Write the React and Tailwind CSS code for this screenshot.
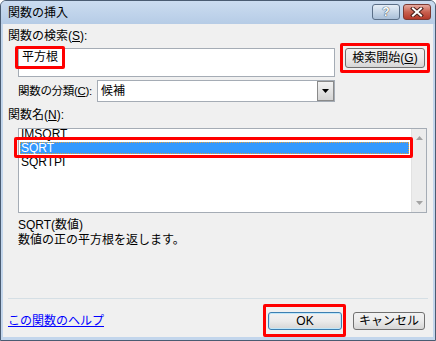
import React from "react";

const btn =
  "h-[18px] rounded-[3px] border bg-gradient-to-b from-[#f2f2f2] via-[#ebebeb] to-[#d6d6d6] flex items-center justify-center text-[12px] leading-none";

const RedBox = ({ className }) => (
  <div className={`absolute border-[3px] border-[#ff0000] rounded-[2px] pointer-events-none ${className}`} />
);

export default function App() {
  return (
    <div className="w-[436px] h-[341px] bg-white font-['Liberation_Sans','Noto_Sans_CJK_JP',sans-serif] text-[12px] text-black">
      <div className="w-full h-full flex flex-col rounded-t-[6px] border border-[#4a5c72] bg-[#c3d6ec]">
        {/* title bar */}
        <div className="h-[23px] shrink-0 flex items-center pl-[7px] pr-[4px] rounded-t-[5px] bg-gradient-to-b from-[#cbdcf0] to-[#b6cce6]">
          <span className="text-[12px] leading-none text-black">関数の挿入</span>
          <div className="ml-auto flex gap-[3px] self-start mt-[3px]">
            <div className="w-[28px] h-[16px] rounded-[3px] border border-[#5b6f88] bg-gradient-to-b from-[#e6eef7] via-[#c8d7e8] to-[#a9bfd8] flex items-center justify-center">
              <span className="text-[12px] font-bold leading-none text-white [text-shadow:0_0_1px_#2b3a4e,0_0_1px_#2b3a4e]">?</span>
            </div>
            <div className="w-[28px] h-[16px] rounded-[3px] border border-[#7b3a33] bg-gradient-to-b from-[#e6a99f] via-[#c8604f] to-[#b4392a] flex items-center justify-center">
              <svg width="14" height="10" viewBox="0 0 14 10">
                <path d="M3 1.5 L11 8.5 M11 1.5 L3 8.5" stroke="#4a1f1a" strokeWidth="4" strokeLinecap="square" />
                <path d="M3 1.5 L11 8.5 M11 1.5 L3 8.5" stroke="#ffffff" strokeWidth="2" strokeLinecap="square" />
              </svg>
            </div>
          </div>
        </div>

        {/* content */}
        <div className="flex-1 mx-[2px] mb-[3px] bg-[#f0f0f0] flex flex-col">
          <div className="pl-[5px] pt-[5px] leading-[14px]">
            関数の検索(<u>S</u>):
          </div>

          <div className="flex items-start ml-[15px] mt-[5px]">
            <div className="relative w-[317px] h-[29px] border border-[#a5acb5] bg-white pl-[3px] pt-[1px] leading-[14px]">
              平方根
              <RedBox className="left-[-4px] top-[-3px] w-[50px] h-[23px]" />
            </div>
            <div className="relative ml-[10px]">
              <div className={`${btn} w-[80px] h-[20px] border-[#707070]`}>
                検索開始(<u>G</u>)
              </div>
              <RedBox className="left-[-5px] top-[-5px] w-[90px] h-[30px]" />
            </div>
          </div>

          <div className="flex items-center ml-[15px] mt-[3px]">
            <div className="w-[79px] shrink-0 whitespace-nowrap leading-[22px] text-[11.5px] tracking-[-0.3px]">
              関数の分類(<u>C</u>):
            </div>
            <div className="w-[238px] h-[22px] border border-[#a5acb5] bg-white flex items-center">
              <span className="pl-[3px] flex-1 leading-none">候補</span>
              <div className="w-[17px] h-[20px] border border-[#8a8a8a] bg-gradient-to-b from-[#f2f2f2] to-[#d4d4d4] flex items-center justify-center">
                <svg width="7" height="4" viewBox="0 0 7 4">
                  <path d="M0 0 H7 L3.5 4 Z" fill="#000" />
                </svg>
              </div>
            </div>
          </div>

          <div className="pl-[5px] mt-[6px] leading-[14px]">
            関数名(<u>N</u>):
          </div>

          <div className="relative ml-[15px] mt-[6px] w-[409px] h-[85px] border border-[#a5acb5] bg-white flex">
            <div className="flex-1 overflow-hidden pl-[1px] pr-[2px]">
              <div className="-mt-[2px] h-[14px] leading-[14px] pl-[1px]">IMSQRT</div>
              <div className="h-[14px] py-[1px]">
                <div className="h-full bg-[#3399ff] text-white border border-dotted border-[#e0a040] leading-[10px]">
                  SQRT
                </div>
              </div>
              <div className="h-[14px] leading-[14px] pl-[1px]">SQRTPI</div>
            </div>
            <div className="w-[15px] bg-[#ececec] border-l border-[#e2e2e2] flex flex-col items-center justify-between py-[7px]">
              <svg width="7" height="4" viewBox="0 0 7 4">
                <path d="M0 4 H7 L3.5 0 Z" fill="#a3a3a3" />
              </svg>
              <svg width="7" height="4" viewBox="0 0 7 4">
                <path d="M0 0 H7 L3.5 4 Z" fill="#a3a3a3" />
              </svg>
            </div>
            <RedBox className="left-[-5px] top-[8px] w-[399px] h-[21px]" />
          </div>

          <div className="pl-[15px] mt-[5px] leading-[15px]">
            <div>SQRT(数値)</div>
            <div>数値の正の平方根を返します。</div>
          </div>

          <div className="flex-1" />

          <div className="mx-[5px] h-[1px] bg-[#d5dfe5]" />

          <div className="flex items-center mt-[13px] pb-[7px] pl-[5px] pr-[8px]">
            <a className="text-[#0000ff] underline leading-none cursor-pointer">この関数のヘルプ</a>
            <div className="ml-auto flex gap-[11px]">
              <div className="relative">
                <div className={`${btn} w-[74px] border-[#3c7fb1] shadow-[inset_0_0_0_1px_#bfe6f9]`}>OK</div>
                <RedBox className="left-[-5px] top-[-8px] w-[83px] h-[33px]" />
              </div>
              <div className={`${btn} w-[72px] border-[#707070]`}>キャンセル</div>
            </div>
          </div>
        </div>
      </div>
    </div>
  );
}
